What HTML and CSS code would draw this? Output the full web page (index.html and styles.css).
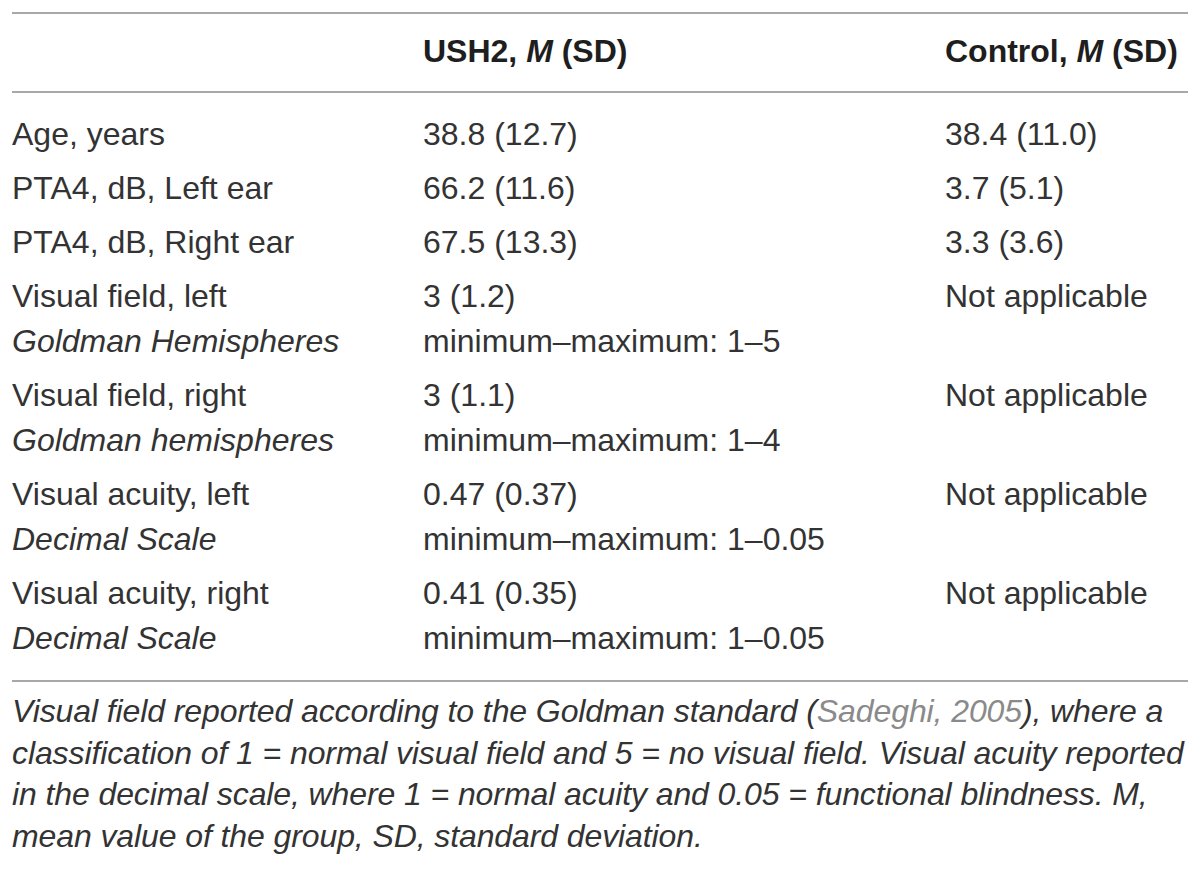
FILE: index.html
```html
<!DOCTYPE html>
<html lang="en">
<head>
<meta charset="utf-8">
<title>Table</title>
<link rel="stylesheet" href="styles.css">
</head>
<body>
<div class="page">
  <div class="table">
    <div class="thead">
      <div class="row">
        <div class="cell c1"></div>
        <div class="cell c2 th">USH2, <i>M</i> (SD)</div>
        <div class="cell c3 th">Control, <i>M</i> (SD)</div>
      </div>
    </div>
    <div class="tbody">
      <div class="row">
        <div class="cell c1">Age, years</div>
        <div class="cell c2">38.8 (12.7)</div>
        <div class="cell c3">38.4 (11.0)</div>
      </div>
      <div class="row">
        <div class="cell c1">PTA4, dB, Left ear</div>
        <div class="cell c2">66.2 (11.6)</div>
        <div class="cell c3">3.7 (5.1)</div>
      </div>
      <div class="row">
        <div class="cell c1">PTA4, dB, Right ear</div>
        <div class="cell c2">67.5 (13.3)</div>
        <div class="cell c3">3.3 (3.6)</div>
      </div>
      <div class="row">
        <div class="cell c1">Visual field, left<br><i>Goldman Hemispheres</i></div>
        <div class="cell c2">3 (1.2)<br>minimum–maximum: 1–5</div>
        <div class="cell c3">Not applicable</div>
      </div>
      <div class="row">
        <div class="cell c1">Visual field, right<br><i>Goldman hemispheres</i></div>
        <div class="cell c2">3 (1.1)<br>minimum–maximum: 1–4</div>
        <div class="cell c3">Not applicable</div>
      </div>
      <div class="row">
        <div class="cell c1">Visual acuity, left<br><i>Decimal Scale</i></div>
        <div class="cell c2">0.47 (0.37)<br>minimum–maximum: 1–0.05</div>
        <div class="cell c3">Not applicable</div>
      </div>
      <div class="row">
        <div class="cell c1">Visual acuity, right<br><i>Decimal Scale</i></div>
        <div class="cell c2">0.41 (0.35)<br>minimum–maximum: 1–0.05</div>
        <div class="cell c3">Not applicable</div>
      </div>
    </div>
  </div>
  <p class="note">Visual field reported according to the Goldman standard (<span class="ref">Sadeghi, 2005</span>), where a<br>classification of 1 = normal visual field and 5 = no visual field. Visual acuity reported<br>in the decimal scale, where 1 = normal acuity and 0.05 = functional blindness. M,<br>mean value of the group, SD, standard deviation.</p>
</div>
</body>
</html>
```

FILE: styles.css
```css
html, body {
  margin: 0;
  padding: 0;
  background: #ffffff;
}

body {
  font-family: "Liberation Sans", Arial, Helvetica, sans-serif;
  color: #333333;
  font-size: 32px;
}

.page {
  padding: 12px 12px 0 12px;
  width: 1176px;
}

.table {
  border-top: 2px solid #a8a8a8;
  border-bottom: 2px solid #a8a8a8;
}

.thead {
  border-bottom: 2px solid #a8a8a8;
  padding: 15px 0 17px 0;
}

.tbody {
  padding: 14px 0 15px 0;
}

.row {
  display: grid;
  grid-template-columns: 411px 522px 1fr;
  padding: 4.5px 0;
  line-height: 45px;
}

.thead .row {
  padding: 0;
}

.th {
  font-weight: bold;
  color: #1e1e1e;
}

.cell {
  white-space: nowrap;
}

.note {
  margin: 0;
  padding-top: 9px;
  font-style: italic;
  line-height: 41.7px;
  letter-spacing: -0.1px;
  white-space: nowrap;
}

.ref {
  color: #8a8a8a;
}
```
